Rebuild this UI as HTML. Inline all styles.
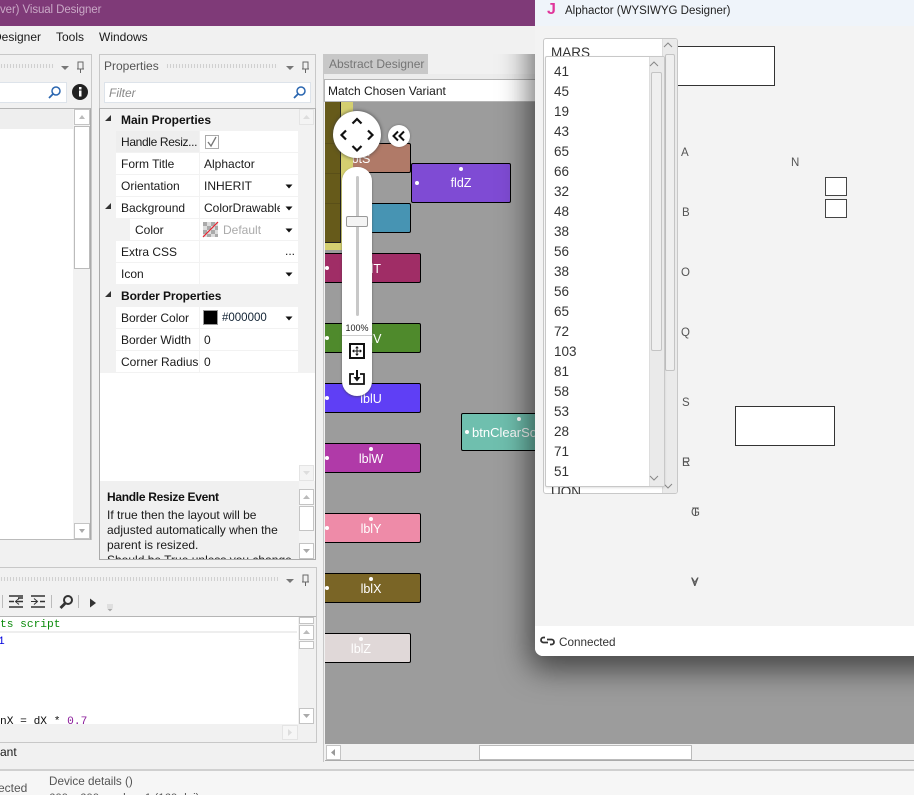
<!DOCTYPE html>
<html><head><meta charset="utf-8">
<style>
html,body{margin:0;padding:0;width:914px;height:795px;overflow:hidden}
body{position:relative;background:#f1f1f1;font-family:"Liberation Sans",sans-serif;font-size:12px;color:#1a1a1a}
div,span{position:absolute;box-sizing:border-box;white-space:nowrap}
svg{position:absolute;overflow:visible}
#root{left:0;top:0;width:914px;height:795px;overflow:hidden;background:#f1f1f1}
.t{line-height:16px;height:16px}
.b{font-weight:bold;color:#111}
.row{background:#fff;height:21px}
.sb{background:#fff;border:1px solid #c4c4c4}
.grip{height:4px;background-image:radial-gradient(circle,#b5b5b5 .7px,transparent .8px);background-size:3px 2px}
.box{border:1px solid #000;border-radius:2px}
.dot{width:4px;height:4px;border-radius:50%;background:#fff}
.lbl{color:#fff;font-size:12.5px;line-height:16px;height:16px;text-align:center;width:60px}
.num{left:554px;font-size:13.5px;color:#333;line-height:18px;height:18px}
.let{font-size:11.5px;color:#555;line-height:14px;height:14px}
</style></head><body><div id="root">

<!-- title + menu -->
<div style="left:0;top:0;width:535px;height:26px;background:#7f3a78"></div>
<div class="t" style="left:0;top:2px;color:#c9a8c6;font-size:11.5px;letter-spacing:-.1px">ver) Visual Designer</div>
<div class="t" style="left:-7px;top:29px">Designer</div>
<div class="t" style="left:56px;top:29px">Tools</div>
<div class="t" style="left:99px;top:29px">Windows</div>

<!-- left panel -->
<div style="left:0;top:54px;width:92px;height:486px;border:1px solid #c8c8c8;border-left:0;background:#f1f1f1"></div>
<div class="grip" style="left:0;top:64px;width:54px"></div>
<svg style="left:0;top:0" width="100" height="110"><path d="M61 66h8l-4 4z" fill="#777"/><path d="M78 62h5v7h-5zM80.500 69v4M77 69h7" fill="none" stroke="#666" stroke-width="1"/></svg>
<div style="left:0;top:82px;width:67px;height:21px;background:#fff;border:1px solid #dde3ea;border-left:0"></div>
<svg style="left:48px;top:85px" width="14" height="14"><circle cx="8" cy="6" r="4" fill="none" stroke="#2a66b0" stroke-width="1.500"/><path d="M5 9l-4 4" stroke="#2a66b0" stroke-width="1.800"/></svg>
<svg style="left:72px;top:84px" width="16" height="16"><circle cx="8" cy="8" r="8" fill="#222"/><rect x="7" y="6.500" width="2.500" height="6" fill="#fff"/><rect x="7" y="3" width="2.500" height="2.500" fill="#fff"/></svg>
<div style="left:0;top:108px;width:91px;height:432px;border-top:1px solid #b5b5b5;border-bottom:1px solid #bbb;border-right:1px solid #aaa;background:#f2f2f2"></div>
<div style="left:0;top:109px;width:73px;height:430px;background:#fff"></div>
<div style="left:0;top:109px;width:73px;height:20px;background:#eee"></div>
<div class="sb" style="left:74px;top:109px;width:16px;height:16px"></div>
<svg style="left:74px;top:109px" width="16" height="16"><path d="M5 10h6l-3-4z" fill="#bbb"/></svg>
<div class="sb" style="left:74px;top:126px;width:16px;height:143px;border-color:#bbb"></div>
<div class="sb" style="left:74px;top:523px;width:16px;height:16px"></div>
<svg style="left:74px;top:523px" width="16" height="16"><path d="M5 6h6l-3 4z" fill="#aaa"/></svg>

<!-- properties panel -->
<div style="left:99px;top:54px;width:217px;height:506px;border:1px solid #c8c8c8;background:#f1f1f1"></div>
<div class="t" style="left:104px;top:58px;color:#555">Properties</div>
<div class="grip" style="left:166px;top:64px;width:112px"></div>
<svg style="left:0;top:0" width="320" height="80"><path d="M286 66h8l-4 4z" fill="#777"/><path d="M303 62h5v7h-5zM305.500 69v4M302 69h7" fill="none" stroke="#666"/></svg>
<div style="left:104px;top:82px;width:207px;height:21px;background:#fff;border:1px solid #dde3ea"></div>
<div class="t" style="left:109px;top:85px;color:#888;font-style:italic">Filter</div>
<svg style="left:293px;top:85px" width="14" height="14"><circle cx="8" cy="6" r="4" fill="none" stroke="#2a66b0" stroke-width="1.500"/><path d="M5 9l-4 4" stroke="#2a66b0" stroke-width="1.800"/></svg>
<div style="left:99px;top:108px;width:217px;height:452px;border:1px solid #aaa;border-top-color:#b5b5b5;background:#fff"></div>
<div style="left:100px;top:109px;width:215px;height:371px;background:#fff"></div>
<div style="left:100px;top:109px;width:215px;height:264px;background:#f2f2f2"></div>
<!-- rows -->
<div class="row" style="left:116px;top:131px;width:83px;background:#eee"></div>
<div class="row" style="left:200px;top:131px;width:98px"></div>
<div class="row" style="left:116px;top:153px;width:83px"></div><div class="row" style="left:200px;top:153px;width:98px"></div>
<div class="row" style="left:116px;top:175px;width:83px"></div><div class="row" style="left:200px;top:175px;width:98px"></div>
<div class="row" style="left:116px;top:197px;width:83px"></div><div class="row" style="left:200px;top:197px;width:98px"></div>
<div class="row" style="left:130px;top:219px;width:69px"></div><div class="row" style="left:200px;top:219px;width:98px"></div>
<div class="row" style="left:116px;top:241px;width:83px"></div><div class="row" style="left:200px;top:241px;width:98px"></div>
<div class="row" style="left:116px;top:263px;width:83px"></div><div class="row" style="left:200px;top:263px;width:98px"></div>
<div class="row" style="left:116px;top:307px;width:83px"></div><div class="row" style="left:200px;top:307px;width:98px"></div>
<div class="row" style="left:116px;top:329px;width:83px"></div><div class="row" style="left:200px;top:329px;width:98px"></div>
<div class="row" style="left:116px;top:351px;width:83px"></div><div class="row" style="left:200px;top:351px;width:98px"></div>

<svg style="left:100px;top:109px" width="20" height="200"><path d="M11 6v6h-6zM11 94v6h-6zM11 182v6h-6z" fill="#333"/></svg>
<div class="t b" style="left:121px;top:112px">Main Properties</div>
<div class="t" style="left:121px;top:134px;letter-spacing:-.35px">Handle Resiz...</div>
<div class="t" style="left:121px;top:156px">Form Title</div>
<div class="t" style="left:121px;top:178px">Orientation</div>
<div class="t" style="left:121px;top:200px">Background</div>
<div class="t" style="left:135px;top:222px">Color</div>
<div class="t" style="left:121px;top:244px">Extra CSS</div>
<div class="t" style="left:121px;top:266px">Icon</div>
<div class="t b" style="left:121px;top:288px;letter-spacing:-.1px">Border Properties</div>
<div class="t" style="left:121px;top:310px">Border Color</div>
<div class="t" style="left:121px;top:332px">Border Width</div>
<div class="t" style="left:121px;top:354px">Corner Radius</div>
<svg style="left:205px;top:135px" width="14" height="14"><rect x=".5" y=".5" width="13" height="13" fill="#fff" stroke="#aaa"/><path d="M3 7l3 4 5-9" fill="none" stroke="#777" stroke-width="1.300"/></svg>
<div class="t" style="left:204px;top:156px">Alphactor</div>
<div class="t" style="left:204px;top:178px">INHERIT</div>
<div class="t" style="left:204px;top:200px;width:76px;overflow:hidden">ColorDrawable</div>
<svg style="left:203px;top:222px" width="15" height="15"><rect width="15" height="15" fill="#ddd"/><path d="M0 0h4v4h-4zM8 0h4v4h-4zM4 4h4v4h-4zM12 4h3v4h-3zM0 8h4v4h-4zM8 8h4v4h-4zM4 12h4v3h-4zM12 12h3v3h-3z" fill="#aaa"/><path d="M0 15L15 0" stroke="#e8222e" stroke-width="1.200"/></svg>
<div class="t" style="left:223px;top:222px;color:#aaa">Default</div>
<div class="t" style="left:285px;top:243px">...</div>
<svg style="left:203px;top:310px" width="15" height="15"><rect x=".5" y=".5" width="14" height="14" fill="#000" stroke="#999"/></svg>
<div class="t" style="left:222px;top:310px;font-size:11.5px;color:#123">#000000</div>
<div class="t" style="left:204px;top:332px">0</div>
<div class="t" style="left:204px;top:354px">0</div>
<svg style="left:0;top:0" width="300" height="330"><path d="M285.500 184.500h7l-3.500 4zM285.500 206.500h7l-3.500 4zM285.500 228.500h7l-3.500 4zM285.500 272.500h7l-3.500 4zM285.500 316.500h7l-3.500 4z" fill="#111"/></svg>
<!-- props scroll -->
<div class="sb" style="left:299px;top:109px;width:15px;height:16px;border-color:#e4e4e4;background:#f4f4f4"></div>
<svg style="left:299px;top:109px" width="15" height="16"><path d="M4 10h7l-3.500-4z" fill="#ddd"/></svg>
<div class="sb" style="left:299px;top:465px;width:15px;height:16px;border-color:#e4e4e4;background:#f4f4f4"></div>
<svg style="left:299px;top:465px" width="15" height="16"><path d="M4 6h7l-3.500 4z" fill="#ddd"/></svg>
<!-- desc -->
<div style="left:100px;top:481px;width:215px;height:78px;background:#f0f0f0;overflow:hidden">
 <div class="t b" style="left:7px;top:8px;letter-spacing:-.3px">Handle Resize Event</div>
 <div class="t" style="left:7px;top:26px">If true then the layout will be</div>
 <div class="t" style="left:7px;top:41px">adjusted automatically when the</div>
 <div class="t" style="left:7px;top:56px">parent is resized.</div>
 <div class="t" style="left:7px;top:71px">Should be True unless you change</div>
</div>
<div style="left:299px;top:481px;width:16px;height:78px;background:#f4f4f4"></div>
<div class="sb" style="left:299px;top:489px;width:15px;height:16px"></div>
<svg style="left:299px;top:489px" width="15" height="16"><path d="M4 10h7l-3.500-4z" fill="#bbb"/></svg>
<div class="sb" style="left:299px;top:506px;width:15px;height:25px"></div>
<div class="sb" style="left:299px;top:543px;width:15px;height:16px"></div>
<svg style="left:299px;top:543px" width="15" height="16"><path d="M4 6h7l-3.500 4z" fill="#aaa"/></svg>

<!-- bottom panel -->
<div style="left:0;top:567px;width:317px;height:176px;border:1px solid #c8c8c8;border-left:0;background:#f1f1f1"></div>
<div class="grip" style="left:0;top:577px;width:278px"></div>
<svg style="left:0;top:560px" width="320" height="70">
 <path d="M286 19h8l-4 4z" fill="#777"/><path d="M303 15h5v7h-5zM305.500 22v4M302 22h7" fill="none" stroke="#666"/>
 <path d="M2.500 35v13M51.500 35v13M78.500 35v13" stroke="#bbb"/>
 <path d="M9 41.500h5M18 38h5M18 41.500h5M9 47h14M9 36h14" stroke="#333" stroke-width="1.500" fill="none"/>
 <path d="M22 41.500h-6m3-3l-3.500 3 3.500 3" stroke="#333" fill="none"/>
 <path d="M40 41.500h5M31 47h14M31 36h14" stroke="#333" stroke-width="1.500" fill="none"/>
 <path d="M31 41.500h6m-3-3l3.500 3-3.500 3" stroke="#333" fill="none"/>
 <circle cx="68" cy="40" r="4" fill="none" stroke="#333" stroke-width="2"/><path d="M65 43.500l-4.500 4.500" stroke="#333" stroke-width="2.800"/>
 <path d="M90 38.500l6 4.500-6 4.500z" fill="#333"/>
 <path d="M107 45h6M107 47h6M108 49h4l-2 2z" fill="#aaa" stroke="#aaa" stroke-width=".6"/>
</svg>
<div style="left:0;top:616px;width:316px;height:110px;background:#f1f1f1;border-top:1px solid #b5b5b5"></div>
<div style="left:0;top:617px;width:298px;height:107px;background:#fff;overflow:hidden;font-family:'Liberation Mono',monospace;font-size:11.2px">
 <div style="left:0;top:14px;width:297px;height:2px;background:#eee"></div>
 <div style="left:0;top:0;line-height:16px;color:#0a8a0a">ts script</div>
 <div style="left:-2px;top:17px;line-height:16px;color:#00d">1</div>
 <div style="left:0;top:97px;line-height:16px;color:#111">nX = dX * <span style="position:static;color:#8a1a9a">0.7</span></div>
</div>
<div class="sb" style="left:299px;top:617px;width:15px;height:7px"></div>
<div class="sb" style="left:299px;top:625px;width:15px;height:15px"></div>
<svg style="left:299px;top:625px" width="15" height="15"><path d="M4 9h7l-3.500-4z" fill="#bbb"/></svg>
<div class="sb" style="left:299px;top:641px;width:15px;height:8px"></div>
<div class="sb" style="left:299px;top:708px;width:15px;height:16px"></div>
<svg style="left:299px;top:708px" width="15" height="16"><path d="M4 6h7l-3.500 4z" fill="#aaa"/></svg>
<div class="sb" style="left:282px;top:725px;width:16px;height:15px;border-color:#e4e4e4;background:#f6f6f6"></div>
<svg style="left:282px;top:725px" width="16" height="15"><path d="M6 4v7l4-3.500z" fill="#ddd"/></svg>
<div class="t" style="left:0;top:744px">ant</div>

<!-- status -->
<div style="left:0;top:769px;width:914px;height:26px;background:#f6f6f6;border-top:2px solid #d0d0d0"></div>
<div class="t" style="left:-2px;top:780px;color:#555">ected</div>
<div class="t" style="left:49px;top:773px;color:#555;font-size:11.7px;margin-top:1px">Device details ()</div>
<div class="t" style="left:49px;top:790px;color:#555;font-size:11.4px">600 x 600, scale = 1 (160 dpi)</div>

<!-- designer -->
<div style="left:323px;top:54px;width:210px;height:708px;background:#f1f1f1;border-left:1px solid #c8c8c8"></div>
<div class="t" style="left:324px;top:54px;width:104px;height:20px;background:#c8c8c8;color:#757575;line-height:21px;padding-left:5px">Abstract Designer</div>
<div style="left:324px;top:74px;width:220px;height:5px;background:#ececec"></div>
<div style="left:324px;top:79px;width:220px;height:23px;background:#fff;border:1px solid #b5b5b5"></div>
<div class="t" style="left:328px;top:83px">Match Chosen Variant</div>
<div style="left:325px;top:102px;width:600px;height:642px;background:#9c9c9c;overflow:hidden">
 <div class="box" style="left:-20px;top:41px;width:106px;height:30px;background:#b07a68"></div>
 <div class="lbl" style="left:6px;top:49px">btS</div>
 <div class="box" style="left:86px;top:61px;width:100px;height:40px;background:#7f4bd4"></div>
 <div class="lbl" style="left:106px;top:73px">fldZ</div>
 <div class="dot" style="left:134px;top:65px"></div><div class="dot" style="left:90px;top:79px"></div>
 <div class="box" style="left:-20px;top:101px;width:106px;height:30px;background:#4794b3"></div>
 <div style="left:0;top:0;width:28px;height:148px;background:#d4cf70"></div>
 <div style="left:0;top:0;width:16px;height:141px;background:#665a1a;border-right:1px solid #222;border-bottom:1px solid #222"></div>
 <div style="left:0;top:41px;width:15px;height:1px;background:#5a4f18"></div>
 <div style="left:0;top:71px;width:15px;height:1px;background:#5a4f18"></div>
 <div style="left:0;top:101px;width:15px;height:1px;background:#5a4f18"></div>
 <div class="box" style="left:-20px;top:151px;width:116px;height:30px;background:#a02d66"></div>
 <div class="lbl" style="left:16px;top:159px">lblT</div><div class="dot" style="left:0;top:164px"></div>
 <div class="box" style="left:-20px;top:221px;width:116px;height:30px;background:#4f8a2c"></div>
 <div class="lbl" style="left:16px;top:229px">lblV</div><div class="dot" style="left:0;top:234px"></div>
 <div class="box" style="left:-20px;top:281px;width:116px;height:30px;background:#5f3ff5"></div>
 <div class="lbl" style="left:16px;top:289px">lblU</div><div class="dot" style="left:0;top:294px"></div>
 <div class="box" style="left:-20px;top:341px;width:116px;height:30px;background:#b03aa8"></div>
 <div class="lbl" style="left:16px;top:349px">lblW</div><div class="dot" style="left:0;top:354px"></div><div class="dot" style="left:44px;top:345px"></div>
 <div class="box" style="left:-20px;top:411px;width:116px;height:30px;background:#ee8ba8"></div>
 <div class="lbl" style="left:16px;top:419px">lblY</div><div class="dot" style="left:0;top:424px"></div><div class="dot" style="left:44px;top:415px"></div>
 <div class="box" style="left:-20px;top:471px;width:116px;height:30px;background:#7a6526"></div>
 <div class="lbl" style="left:16px;top:479px">lblX</div><div class="dot" style="left:0;top:484px"></div><div class="dot" style="left:44px;top:475px"></div>
 <div class="box" style="left:-20px;top:531px;width:106px;height:30px;background:#e0d8d8"></div>
 <div class="lbl" style="left:6px;top:539px">lblZ</div><div class="dot" style="left:34px;top:535px"></div>
 <div class="box" style="left:136px;top:311px;width:130px;height:38px;background:#6fbfae"></div>
 <div class="lbl" style="left:147px;top:323px;width:auto;text-align:left;font-size:13px">btnClearSolution</div>
 <div class="dot" style="left:192px;top:315px"></div><div class="dot" style="left:140px;top:328px"></div>
</div>
<!-- nav overlay -->
<div style="left:333px;top:111px;width:48px;height:47px;border-radius:50%;background:#fff;box-shadow:0 0 3px 1px rgba(60,60,60,.55)"></div>
<svg style="left:333px;top:111px" width="48" height="48"><path d="M19.500 12.500l4.500-4.500 4.500 4.500M13 19.500l-4.500 4.500 4.500 4.500M35 19.500l4.500 4.500-4.500 4.500M19.500 35l4.500 4.500 4.500-4.500" fill="none" stroke="#111" stroke-width="2.200"/></svg>
<div style="left:388px;top:125px;width:22px;height:22px;border-radius:50%;background:#fff;box-shadow:0 0 2px rgba(60,60,60,.5)"></div>
<svg style="left:388px;top:125px" width="22" height="22"><path d="M10 6.500L5.500 11l4.500 4.500M16 6.500L11.500 11l4.500 4.500" fill="none" stroke="#111" stroke-width="2"/></svg>
<div style="left:342px;top:167px;width:30px;height:229px;background:#fff;border-radius:14px 14px 15px 15px;box-shadow:0 1px 2px rgba(60,60,60,.6)"></div>
<div style="left:356px;top:176px;width:3px;height:140px;background:#c8c8c8;border-radius:2px"></div>
<div style="left:346px;top:216px;width:22px;height:11px;background:#f4f4f4;border:1px solid #999;border-radius:2px"></div>
<div style="left:342px;top:322px;width:30px;text-align:center;font-size:9px;line-height:12px;height:12px;color:#222">100%</div>
<div style="left:342px;top:335px;width:30px;height:1px;background:#ccc"></div>
<svg style="left:349px;top:343px" width="16" height="16"><rect x="1" y="1" width="14" height="14" fill="none" stroke="#111" stroke-width="2"/><path d="M8 3.500v9M3.500 8h9" stroke="#111"/><path d="M8 3l-1.800 2.200h3.600zM8 13l-1.800-2.200h3.600zM3 8l2.200-1.800v3.600zM13 8l-2.200-1.800v3.600z" fill="#111"/></svg>
<svg style="left:349px;top:369px" width="16" height="16"><path d="M5 5H1v10h14V5h-4" fill="none" stroke="#111" stroke-width="1.800"/><path d="M8 1v10" stroke="#111" stroke-width="2"/><path d="M4.500 8L8 12.500 11.500 8z" fill="#111"/></svg>

<!-- h scroll -->
<div style="left:325px;top:744px;width:589px;height:17px;background:#f1f1f1;border-bottom:1px solid #aaa"></div>
<div class="sb" style="left:326px;top:745px;width:15px;height:15px"></div>
<svg style="left:326px;top:745px" width="15" height="15"><path d="M9 4v7l-4-3.500z" fill="#999"/></svg>
<div class="sb" style="left:479px;top:745px;width:213px;height:15px;border-color:#bbb"></div>

<!-- floating window shadow: clipped to gray zone -->
<div style="left:325px;top:54px;width:589px;height:690px;overflow:hidden">
 <div style="left:210px;top:-64px;width:420px;height:666px;border-radius:8px;box-shadow:0 8px 30px 6px rgba(0,0,0,.55)"></div>
</div>
<!-- floating window -->
<div style="left:535px;top:-10px;width:420px;height:666px;background:#f3f3f3;border-radius:8px"></div>
<div style="left:535px;top:0;width:379px;height:26px;background:#eff4fa"></div>
<div class="t" style="left:547px;top:2px;color:#e0359a;font-weight:bold;font-size:16px">J</div>
<div class="t" style="left:565px;top:3px;font-size:11.5px;color:#222">Alphactor (WYSIWYG Designer)</div>
<div style="left:677px;top:46px;width:98px;height:40px;background:#fff;border:1px solid #333;border-left:0"></div>
<div style="left:735px;top:406px;width:100px;height:40px;background:#fff;border:1px solid #333"></div>
<div style="left:825px;top:177px;width:22px;height:19px;background:#fff;border:1px solid #444"></div>
<div style="left:825px;top:199px;width:22px;height:19px;background:#fff;border:1px solid #444"></div>
<div class="let" style="left:681px;top:146px">A</div>
<div class="let" style="left:791px;top:156px">N</div>
<div class="let" style="left:682px;top:206px">B</div>
<div class="let" style="left:681px;top:266px">O</div>
<div class="let" style="left:681px;top:326px">Q</div>
<div class="let" style="left:682px;top:396px">S</div>
<div class="let" style="left:682px;top:456px">E</div><div class="let" style="left:682px;top:456px">R</div>
<div class="let" style="left:691px;top:506px">G</div><div class="let" style="left:692px;top:506px">T</div>
<div class="let" style="left:691px;top:576px">V</div><div class="let" style="left:691px;top:576px">Y</div>
<!-- outer list -->
<div style="left:543px;top:38px;width:135px;height:456px;background:#fff;border:1px solid #c8c8c8;border-radius:3px;overflow:hidden">
 <div style="left:118px;top:0;width:15px;height:454px;background:#eaeaea;border-left:1px solid #ddd"></div>
 <div style="left:121px;top:15px;width:10px;height:317px;background:#efefef;border:1px solid #c4c4c4;border-radius:2px"></div>
</div>
<div style="left:551px;top:45px;font-size:13.500px;line-height:16px;color:#333">MARS</div>
<div style="left:551px;top:484px;height:10px;width:60px;overflow:hidden;font-size:13.500px;line-height:16px;color:#333">UON</div>
<svg style="left:660px;top:38px" width="18" height="14"><path d="M4 9l4-4 4 4" fill="none" stroke="#888"/></svg>
<svg style="left:660px;top:480px" width="18" height="14"><path d="M4 4l4 4 4-4" fill="none" stroke="#888"/></svg>
<!-- inner list -->
<div style="left:545px;top:56px;width:120px;height:431px;background:#fff;border:1px solid #c8c8c8;border-radius:2px;box-shadow:0 1px 2px rgba(0,0,0,.12);overflow:hidden">
 <div style="left:103px;top:0;width:16px;height:429px;background:#eaeaea;border-left:1px solid #ddd"></div>
 <div style="left:105px;top:15px;width:11px;height:279px;background:#efefef;border:1px solid #c4c4c4;border-radius:2px"></div>
</div>
<svg style="left:647px;top:57px" width="18" height="14"><path d="M3 9l4-4 4 4" fill="none" stroke="#888"/></svg>
<svg style="left:647px;top:473px" width="18" height="14"><path d="M3 3l4 4 4-4" fill="none" stroke="#888"/></svg>
<div class="num" style="top:63px">41</div>
<div class="num" style="top:83px">45</div>
<div class="num" style="top:103px">19</div>
<div class="num" style="top:123px">43</div>
<div class="num" style="top:143px">65</div>
<div class="num" style="top:163px">66</div>
<div class="num" style="top:183px">32</div>
<div class="num" style="top:203px">48</div>
<div class="num" style="top:223px">38</div>
<div class="num" style="top:243px">56</div>
<div class="num" style="top:263px">38</div>
<div class="num" style="top:283px">56</div>
<div class="num" style="top:303px">65</div>
<div class="num" style="top:323px">72</div>
<div class="num" style="top:343px">103</div>
<div class="num" style="top:363px">81</div>
<div class="num" style="top:383px">58</div>
<div class="num" style="top:403px">53</div>
<div class="num" style="top:423px">28</div>
<div class="num" style="top:443px">71</div>
<div class="num" style="top:463px">51</div>
<!-- window status -->
<div style="left:535px;top:626px;width:379px;height:30px;background:#fff;border-radius:0 0 0 8px"></div>
<svg style="left:541px;top:636px" width="13" height="10"><path d="M4 1.500H2.500a2.500 2.500 0 0 0 0 5H7M9 8.500h1.500a2.500 2.500 0 0 0 0-5H6" fill="none" stroke="#333" stroke-width="1.800"/></svg>
<div class="t" style="left:559px;top:635px;color:#333;font-size:11.7px">Connected</div>
</div></body></html>
